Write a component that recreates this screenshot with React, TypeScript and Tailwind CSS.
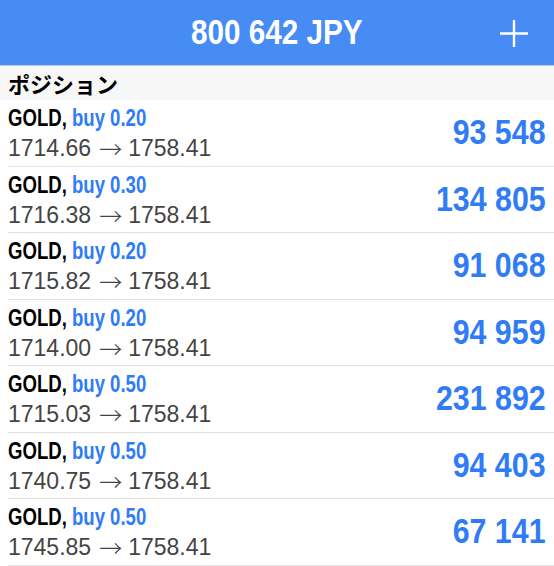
import React from "react";

const rows = [
  { lot: "0.20", open: "1714.66", cur: "1758.41", profit: "93 548" },
  { lot: "0.30", open: "1716.38", cur: "1758.41", profit: "134 805" },
  { lot: "0.20", open: "1715.82", cur: "1758.41", profit: "91 068" },
  { lot: "0.20", open: "1714.00", cur: "1758.41", profit: "94 959" },
  { lot: "0.50", open: "1715.03", cur: "1758.41", profit: "231 892" },
  { lot: "0.50", open: "1740.75", cur: "1758.41", profit: "94 403" },
  { lot: "0.50", open: "1745.85", cur: "1758.41", profit: "67 141" },
];

export default function App() {
  return (
    <div className="w-[554px] h-[566px] overflow-hidden bg-white">
      <div className="h-[66px] bg-[#478bf5] border-b border-[#b3c8ea] relative flex items-center justify-center">
        <span className="inline-block scale-x-[0.86] origin-center font-['Liberation_Sans',sans-serif] font-bold text-[34.5px] leading-none text-white">
          800 642 JPY
        </span>
        <svg className="absolute left-[500px] top-[20px]" width="28" height="27" viewBox="0 0 28 27">
          <path d="M14 0 V27 M0 13.5 H28" stroke="white" strokeWidth="2.4" fill="none" />
        </svg>
      </div>
      <div className="h-[34px] bg-[#f7f7f7] flex items-center pl-[8px]">
        <span className="font-['Noto_Sans_CJK_JP',sans-serif] font-bold text-[22px] leading-none text-black">
          ポジション
        </span>
      </div>
      {rows.map((r, i) => (
        <div key={i} className="h-[66.5px] pl-[8px] flex">
          <div className="flex-1 flex items-start border-b border-[#e1e1e1] pr-[8px]">
            <div className="flex-1 pt-[3px]">
              <div className="h-[30px]">
                <span className="inline-block whitespace-nowrap scale-x-[0.79] origin-left font-['Liberation_Sans',sans-serif] font-bold text-[23.5px] leading-[30px]">
                  <span className="text-black">GOLD,</span>{" "}
                  <span className="text-[#2f7cf6]">buy {r.lot}</span>
                </span>
              </div>
              <div className="h-[30px] font-['Liberation_Sans',sans-serif] text-[23px] leading-[30px] text-[#444444] whitespace-nowrap">
                {r.open}
                <span className="inline-block align-top h-[30px] leading-[30px] ml-[8px] mr-[6px] font-['Noto_Sans_CJK_JP',sans-serif] font-light text-[23px]">→</span>
                {r.cur}
              </div>
            </div>
            <div className="self-center">
              <span className="inline-block whitespace-nowrap scale-x-[0.88] origin-right font-['Liberation_Sans',sans-serif] font-bold text-[34.5px] leading-none text-[#2f7cf6]">
                {r.profit}
              </span>
            </div>
          </div>
        </div>
      ))}
    </div>
  );
}
